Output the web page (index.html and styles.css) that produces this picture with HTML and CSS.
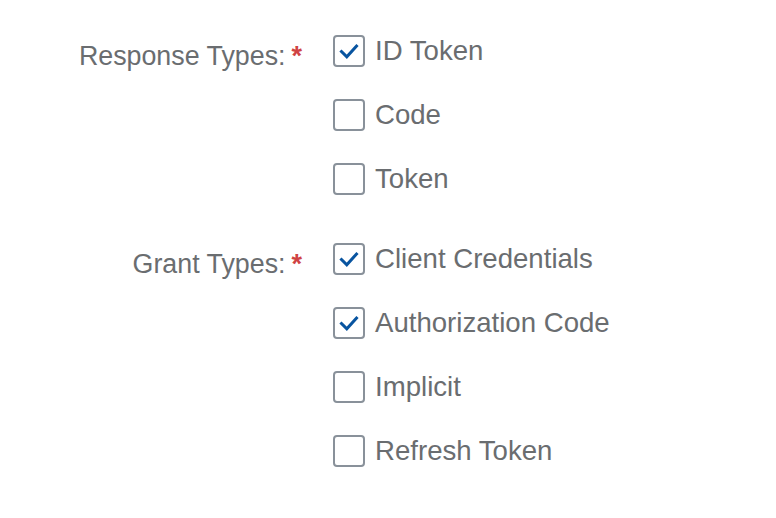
FILE: index.html
```html
<!DOCTYPE html>
<html lang="en">
<head>
<meta charset="utf-8">
<title>Client settings</title>
<link rel="stylesheet" href="styles.css">
</head>
<body>
<form class="form">
  <div class="group">
    <div class="label"><span class="label-text">Response Types:<span class="req">*</span></span></div>
    <div class="options">
      <label class="opt"><span class="box checked"><svg viewBox="0 0 32 32" width="32" height="32"><path d="M8.5 16.5 L13.8 21.8 L23.5 11" /></svg></span><span class="opt-text">ID Token</span></label>
      <label class="opt"><span class="box"></span><span class="opt-text">Code</span></label>
      <label class="opt"><span class="box"></span><span class="opt-text">Token</span></label>
    </div>
  </div>
  <div class="group">
    <div class="label"><span class="label-text">Grant Types:<span class="req">*</span></span></div>
    <div class="options">
      <label class="opt"><span class="box checked"><svg viewBox="0 0 32 32" width="32" height="32"><path d="M8.5 16.5 L13.8 21.8 L23.5 11" /></svg></span><span class="opt-text">Client Credentials</span></label>
      <label class="opt"><span class="box checked"><svg viewBox="0 0 32 32" width="32" height="32"><path d="M8.5 16.5 L13.8 21.8 L23.5 11" /></svg></span><span class="opt-text">Authorization Code</span></label>
      <label class="opt"><span class="box"></span><span class="opt-text">Implicit</span></label>
      <label class="opt"><span class="box"></span><span class="opt-text">Refresh Token</span></label>
    </div>
  </div>
</form>
</body>
</html>
```

FILE: styles.css
```css
html, body {
  margin: 0;
  padding: 0;
  background: #ffffff;
}

body {
  font-family: "Liberation Sans", Arial, sans-serif;
  font-size: 27.6px;
  color: #6a6d70;
}

.form {
  padding-top: 19px;
  display: flex;
  flex-direction: column;
  gap: 16px;
}

.group {
  display: grid;
  grid-template-columns: 302px 1fr;
  column-gap: 31px;
}

.label {
  height: 64px;
  box-sizing: border-box;
  padding-top: 11px;
  display: flex;
  align-items: center;
  justify-content: flex-end;
}

.label-text {
  font-size: 26.8px;
  line-height: 1;
  white-space: nowrap;
}

.req {
  color: #d04343;
  font-weight: bold;
  font-size: 27px;
  margin-left: 6px;
}

.options {
  display: flex;
  flex-direction: column;
}

.opt {
  height: 64px;
  display: flex;
  align-items: center;
  gap: 10px;
}

.box {
  width: 32px;
  height: 32px;
  box-sizing: border-box;
  border: 2px solid #89919a;
  border-radius: 4px;
  background: #fff;
  position: relative;
  flex: none;
}

.box svg {
  position: absolute;
  left: -2px;
  top: -2px;
}

.box svg path {
  fill: none;
  stroke: #0854a0;
  stroke-width: 3;
  stroke-linecap: square;
  stroke-linejoin: miter;
}

.opt-text {
  line-height: 1;
}
```
